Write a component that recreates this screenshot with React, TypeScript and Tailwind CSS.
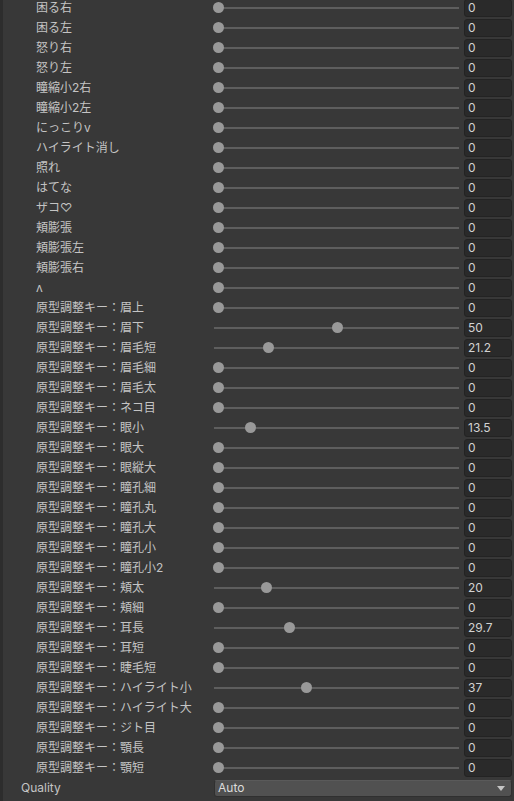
const shapes: [string, number][] = [
  ['困る右', 0],
  ['困る左', 0],
  ['怒り右', 0],
  ['怒り左', 0],
  ['瞳縮小2右', 0],
  ['瞳縮小2左', 0],
  ['にっこりv', 0],
  ['ハイライト消し', 0],
  ['照れ', 0],
  ['はてな', 0],
  ['ザコ♡', 0],
  ['頬膨張', 0],
  ['頬膨張左', 0],
  ['頬膨張右', 0],
  ['ʌ', 0],
  ['原型調整キー：眉上', 0],
  ['原型調整キー：眉下', 50],
  ['原型調整キー：眉毛短', 21.2],
  ['原型調整キー：眉毛細', 0],
  ['原型調整キー：眉毛太', 0],
  ['原型調整キー：ネコ目', 0],
  ['原型調整キー：眼小', 13.5],
  ['原型調整キー：眼大', 0],
  ['原型調整キー：眼縦大', 0],
  ['原型調整キー：瞳孔細', 0],
  ['原型調整キー：瞳孔丸', 0],
  ['原型調整キー：瞳孔大', 0],
  ['原型調整キー：瞳孔小', 0],
  ['原型調整キー：瞳孔小2', 0],
  ['原型調整キー：頬太', 20],
  ['原型調整キー：頬細', 0],
  ['原型調整キー：耳長', 29.7],
  ['原型調整キー：耳短', 0],
  ['原型調整キー：睫毛短', 0],
  ['原型調整キー：ハイライト小', 37],
  ['原型調整キー：ハイライト大', 0],
  ['原型調整キー：ジト目', 0],
  ['原型調整キー：顎長', 0],
  ['原型調整キー：顎短', 0],
]

function SliderRow({ label, value }: { label: string; value: number }) {
  return (
    <div className="flex h-[20px] items-center">
      <div className="w-[210px] shrink-0 whitespace-nowrap pl-[33px] text-[12px] text-[#c4c4c4]">{label}</div>
      <div className="relative h-full w-[251px] shrink-0">
        <div className="absolute left-[1px] right-[5px] top-[9px] h-[2px] bg-[#5e5e5e]" />
        <div
          className="absolute top-[4px] h-[11px] w-[11px] rounded-full bg-[#999999]"
          style={{ left: `${value * 2.38}px` }}
        />
      </div>
      <div className="flex h-[18px] w-[48px] shrink-0 items-center rounded-[3px] border border-[#232323] bg-[#2a2a2a] pl-[3px] text-[12px] text-[#d2d2d2]">
        {value}
      </div>
    </div>
  )
}

export default function App() {
  return (
    <div
      className="flex h-[801px] w-[514px] overflow-hidden bg-[#383838]"
      style={{ fontFamily: "Inter, 'Noto Sans CJK JP', sans-serif" }}
    >
      <div className="w-[3px] shrink-0 bg-[#2d2d2d]" />
      <div className="-mt-[2px] flex flex-col">
        {shapes.map(([label, value]) => (
          <SliderRow key={label} label={label} value={value} />
        ))}
        <div className="flex h-[20px] items-center">
          <div className="w-[211px] shrink-0 pl-[18px] text-[12px] text-[#c4c4c4]">Quality</div>
          <div className="flex h-[17px] w-[298px] items-center justify-between rounded-[3px] border border-[#303030] border-t-[#5a5a5a] bg-[#515151] pl-[3px] pr-[6px] text-[12px] text-[#dcdcdc]">
            <span>Auto</span>
            <svg width="8" height="5" viewBox="0 0 8 5">
              <path d="M0 0 L8 0 L4 5 Z" fill="#c4c4c4" />
            </svg>
          </div>
        </div>
      </div>
    </div>
  )
}
